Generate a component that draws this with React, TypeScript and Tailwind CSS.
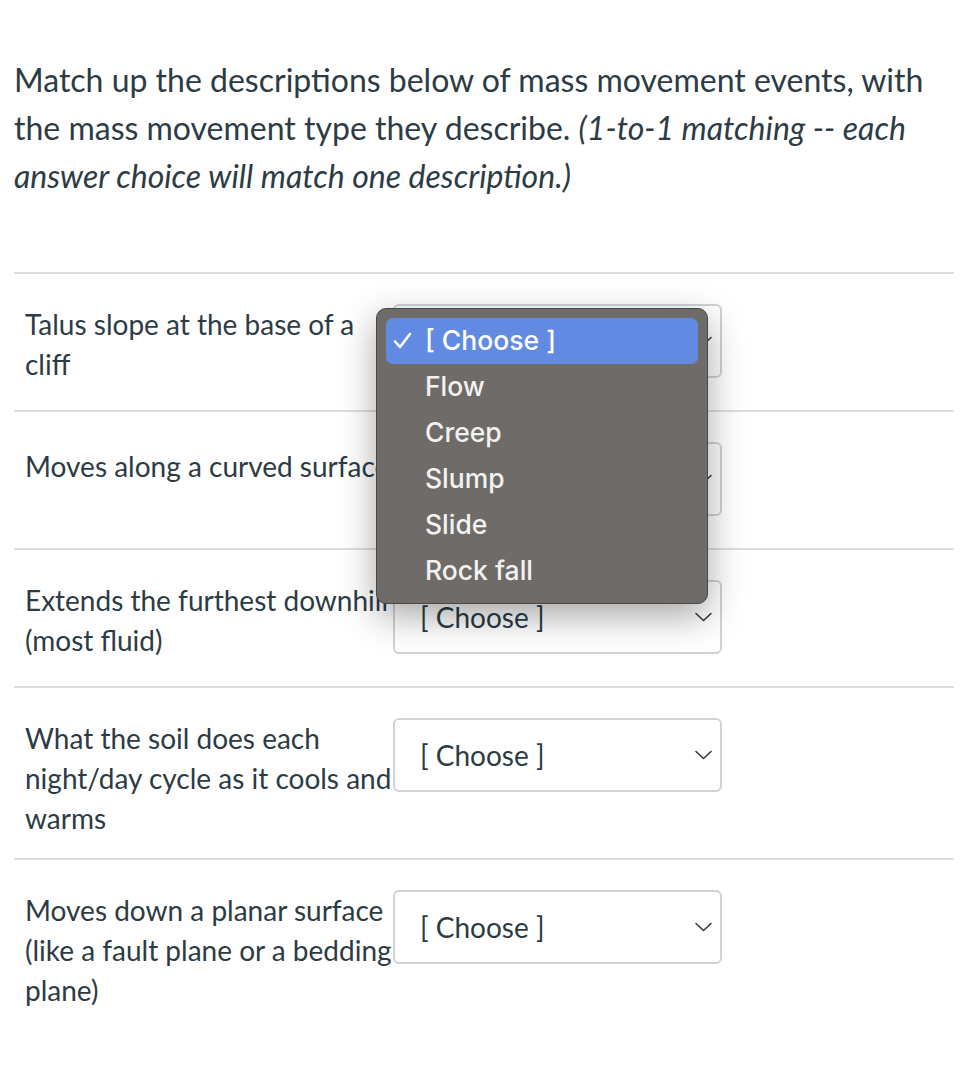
import React from "react";

const rows: string[] = [
  "Talus slope at the base of a cliff",
  "Moves along a curved surface",
  "Extends the furthest downhill (most fluid)",
  "What the soil does each night/day cycle as it cools and warms",
  "Moves down a planar surface (like a fault plane or a bedding plane)",
];

const options = ["Flow", "Creep", "Slump", "Slide", "Rock fall"];

function Chevron() {
  return (
    <svg width="17" height="10" viewBox="0 0 17 10" fill="none">
      <path d="M1 1.5 L8.5 8.5 L16 1.5" stroke="#2d3b45" strokeWidth="1.6" strokeLinecap="round" strokeLinejoin="round" />
    </svg>
  );
}

function SelectBox() {
  return (
    <div className="mb-3 flex h-[74px] w-[329px] shrink-0 items-center justify-between rounded-[6px] border-2 border-[#d0d2d4] bg-white pl-[25px] pr-[8px] text-[28px] text-[#2d3b45]">
      <span>[ Choose ]</span>
      <Chevron />
    </div>
  );
}

export default function App() {
  return (
    <div className="relative min-h-[1068px] w-[980px] bg-white font-['Lato','Liberation_Sans',sans-serif] text-[#2d3b45]">
      <p className="pl-[14px] pr-[14px] pt-[56px] text-[32px] leading-[48px]">
        Match up the descriptions below of mass movement events, with the mass movement type they describe.{" "}
        <em>(1-to-1 matching -- each answer choice will match one description.)</em>
      </p>

      <div className="mx-[14px] mt-[72px] w-[940px]">
        {rows.map((r, i) => (
          <div key={i} className="flex items-start border-t-2 border-[#dedede] pb-5 pl-[11px] pt-[30px]">
            <div className={"w-[368px] shrink-0 text-[28px] leading-[40px] " + (i === 1 ? "pt-[4px]" : "")}>{r}</div>
            <SelectBox />
          </div>
        ))}
      </div>

      <div className="absolute left-[376px] top-[308px] w-[332px] rounded-[10px] border border-[#4c4846] bg-[#6f6b68] p-[9px] font-['Inter','Noto_Sans',sans-serif] text-[26.5px] font-medium text-[#f2f2f2] shadow-[0_12px_36px_rgba(0,0,0,0.35)]">
        <div className="flex h-[46px] items-center rounded-[7px] bg-[#618ae2] pl-[7px] text-white">
          <svg width="32" height="20" viewBox="0 0 32 20" fill="none">
            <path d="M2 10.5 L7 16 L17 3" stroke="white" strokeWidth="2.6" strokeLinecap="round" strokeLinejoin="round" />
          </svg>
          <span>[ Choose ]</span>
        </div>
        {options.map((o) => (
          <div key={o} className="flex h-[46px] items-center pl-[39px]">
            {o}
          </div>
        ))}
      </div>
    </div>
  );
}
